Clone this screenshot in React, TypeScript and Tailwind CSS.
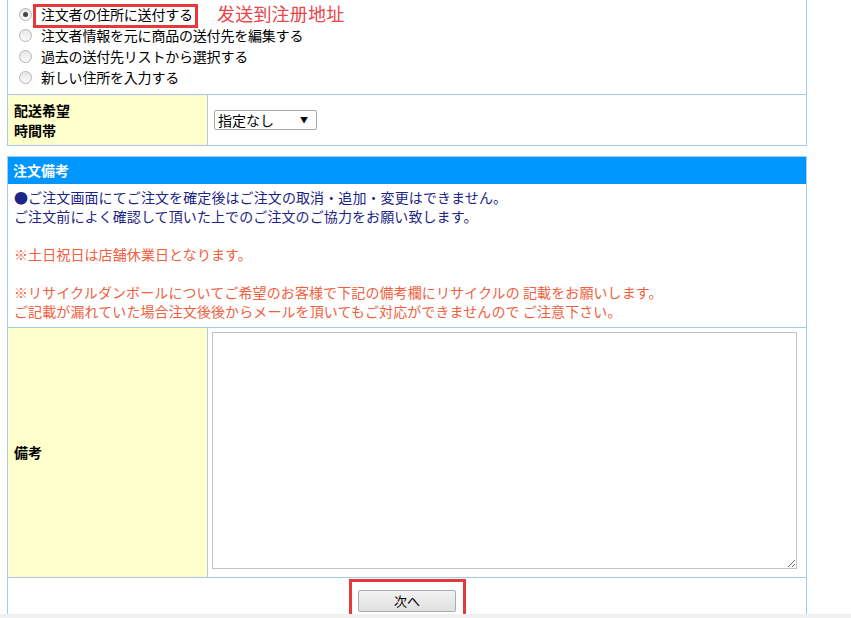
import React from "react";

const font = { fontFamily: '"Noto Sans CJK JP", "Noto Sans", sans-serif' };

function Radio({ checked }: { checked?: boolean }) {
  return (
    <span className="relative inline-flex h-[13px] w-[13px] shrink-0 items-center justify-center rounded-full border border-[#b5b5b5] bg-gradient-to-b from-[#e6e6e6] to-[#fbfbfb]">
      {checked && <span className="h-[5px] w-[5px] rounded-full bg-[#444]" />}
    </span>
  );
}

export default function App() {
  const options = [
    "注文者の住所に送付する",
    "注文者情報を元に商品の送付先を編集する",
    "過去の送付先リストから選択する",
    "新しい住所を入力する",
  ];
  return (
    <div className="relative h-[618px] overflow-hidden bg-white text-[14px] tracking-[0px] text-black" style={font}>
      {/* table 1 */}
      <div className="ml-[7px] w-[800px] border-x border-b border-[#a6cbe6]">
        <div className="border-b border-[#a6cbe6] pb-[6px] pl-[11px] pt-[4px]">
          {options.map((o, i) => (
            <div key={o} className="flex h-[21px] items-center gap-[9px]">
              <Radio checked={i === 0} />
              <span className="relative leading-[21px] tracking-[-0.2px]">
                {o}
                {i === 0 && (
                  <>
                    <span className="absolute left-[-8px] right-[-5px] top-[-0.5px] bottom-[-2.5px] border-[3px] border-[#e53a3a]" />
                    <span className="absolute left-[176px] top-[-3px] whitespace-nowrap text-[18px] leading-[24px] tracking-[0.2px] text-[#e8464a]">
                      发送到注册地址
                    </span>
                  </>
                )}
              </span>
            </div>
          ))}
        </div>
        <div className="flex h-[50px]">
          <div className="flex w-[200px] flex-col justify-center border-r border-[#a6cbe6] bg-[#ffffcc] pl-[6px] text-[14px] font-bold leading-[20px]">
            <div>配送希望</div>
            <div>時間帯</div>
          </div>
          <div className="flex flex-1 items-center pl-[6px]">
            <div className="flex h-[20px] w-[103px] items-center justify-between rounded-[2px] border border-[#a9a9a9] bg-white pl-[3px] pr-[8px] text-[14px]">
              <span>指定なし</span>
              <span className="text-[8px]">▼</span>
            </div>
          </div>
        </div>
      </div>

      {/* table 2 */}
      <div className="ml-[7px] mt-[10px] w-[800px] border-x border-b border-[#a6cbe6]">
        <div className="flex h-[28px] items-center border-t border-[#a6cbe6] bg-[#0096ff] pl-[5px] text-[14px] font-bold text-white">
          注文備考
        </div>
        <div className="border-b border-[#a6cbe6] px-[6px] pb-[6px] pt-[4px] text-[14px] leading-[19px] tracking-[0.1px]">
          <div className="text-[#1c2585]">●ご注文画面にてご注文を確定後はご注文の取消・追加・変更はできません。</div>
          <div className="text-[#1c2585]">ご注文前によく確認して頂いた上でのご注文のご協力をお願い致します。</div>
          <div className="h-[19px]" />
          <div className="text-[#f0603e]">※土日祝日は店舗休業日となります。</div>
          <div className="h-[19px]" />
          <div className="text-[#f0603e]">※リサイクルダンボールについてご希望のお客様で下記の備考欄にリサイクルの 記載をお願いします。</div>
          <div className="text-[#f0603e]">ご記載が漏れていた場合注文後後からメールを頂いてもご対応ができませんので ご注意下さい。</div>
        </div>
        <div className="flex h-[250px] border-b border-[#a6cbe6]">
          <div className="flex w-[200px] items-center border-r border-[#a6cbe6] bg-[#ffffcc] pl-[6px] text-[14px] font-bold">
            備考
          </div>
          <div className="flex-1 pl-[4px] pt-[4px]">
            <textarea className="h-[237px] w-[585px] resize border border-[#c3c3c3] bg-white outline-none" />
          </div>
        </div>
        <div className="flex h-[60px] justify-center pt-[12px]">
          <div className="relative h-[22px]">
            <button className="h-[22px] w-[98px] rounded-[2px] border border-[#acacac] bg-gradient-to-b from-[#f2f2f2] to-[#e0e0e0] text-[13px] text-black">
              次へ
            </button>
            <span className="absolute left-[-9px] right-[-10px] top-[-11px] h-[60px] border-[3px] border-[#e53a3a]" />
          </div>
        </div>
      </div>

      <div className="absolute bottom-0 left-0 right-0 h-[4px] bg-[#f0f0f0]" />
    </div>
  );
}
